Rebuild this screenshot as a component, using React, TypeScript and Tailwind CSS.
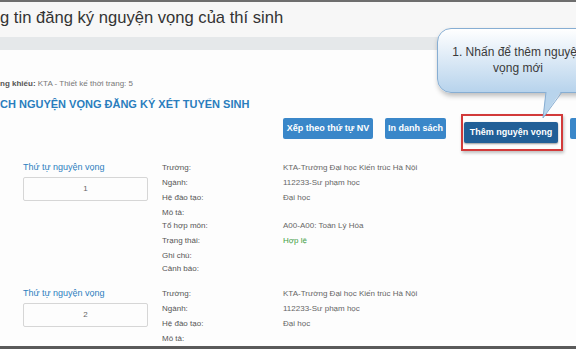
import React from 'react';

const rows1 = [
  { label: 'Trường:', value: 'KTA-Trường Đại học Kiến trúc Hà Nội' },
  { label: 'Ngành:', value: '112233-Sư phạm học' },
  { label: 'Hệ đào tạo:', value: 'Đại học' },
  { label: 'Mô tả:', value: '' },
  { label: 'Tổ hợp môn:', value: 'A00-A00: Toán Lý Hóa' },
  { label: 'Trạng thái:', value: 'Hợp lệ', ok: true },
  { label: 'Ghi chú:', value: '' },
  { label: 'Cảnh báo:', value: '' },
];

const rows2 = rows1.slice(0, 4);

type Row = { label: string; value: string; ok?: boolean };

function Wish({ order, rows }: { order: number; rows: Row[] }) {
  return (
    <div className="flex">
      <div className="w-[162px] pl-[23px]">
        <div className="h-[15px] leading-[15px] text-[9px] text-[#2f7fbf]">Thứ tự nguyện vọng</div>
        <div className="mt-[2px] w-[125px] h-[24px] border border-[#d6d6d6] rounded-[2px] flex items-center justify-center text-[8px] text-[#666]">
          {order}
        </div>
      </div>
      <div className="flex flex-col text-[8px] text-[#666]">
        {rows.map((r) => (
          <div key={r.label} className={`flex ${r.value ? 'h-[15px] leading-[15px]' : 'h-[13px] leading-[15px]'}`}>
            <div className="w-[121px] text-[#555]">{r.label}</div>
            <div className={r.ok ? 'text-[#3f9e45]' : ''}>{r.value}</div>
          </div>
        ))}
      </div>
    </div>
  );
}

export default function App() {
  return (
    <div className="relative w-[576px] h-[349px] overflow-hidden flex flex-col bg-white font-['Liberation_Sans',Arial,sans-serif]">
      <div className="h-[2px] bg-[#6e6e6e]" />
      <div className="h-[35px] bg-[#f7f7f7] pt-[7px] text-[16.6px] leading-[18px] text-[#333] whitespace-nowrap">
        g tin đăng ký nguyện vọng của thí sinh
      </div>
      <div className="h-[13px] bg-[#e5e8ea]" />

      <div className="flex-1 overflow-hidden bg-[#fdfdfd]">
        <div className="mt-[29px] h-[10px] leading-[10px] text-[8px] text-[#777] whitespace-nowrap">
          <span className="font-bold text-[#555]">ng khiếu:</span> KTA - Thiết kế thời trang: 5
        </div>
        <div className="mt-[9px] h-[12px] leading-[12px] text-[11px] font-bold text-[#2a7dbd] whitespace-nowrap">
          CH NGUYỆN VỌNG ĐĂNG KÝ XÉT TUYỂN SINH
        </div>

        <div className="mt-[8px] pl-[283px] flex items-start whitespace-nowrap">
          <button className="w-[90px] h-[21px] shrink-0 rounded-[2px] bg-[#3a87c9] text-white text-[9px] font-bold">
            Xếp theo thứ tự NV
          </button>
          <button className="ml-[12px] w-[61px] h-[21px] shrink-0 rounded-[2px] bg-[#3a87c9] text-white text-[9px] font-bold">
            In danh sách
          </button>
          <div className="ml-[15px] -mt-[4px] shrink-0 border-2 border-[#d23a3a] pl-[1px] pr-[3px] pt-[2px] pb-[6px] shadow-[1px_2px_3px_rgba(0,0,0,0.25)]">
            <button className="w-[94px] h-[21px] rounded-[2px] bg-[#215f97] text-white text-[9px] font-bold shadow-[0_1px_2px_rgba(0,0,0,0.4)]">
              Thêm nguyện vọng
            </button>
          </div>
          <button className="ml-[7px] w-[60px] h-[21px] shrink-0 rounded-[2px] bg-[#3a87c9] text-white text-[9px] font-bold" />
        </div>

        <div className="mt-[9px]">
          <Wish order={1} rows={rows1} />
        </div>
        <div className="mt-[12px]">
          <Wish order={2} rows={rows2} />
        </div>
      </div>
      <div className="h-[3px] bg-[#5a5a5a]" />

      {/* callout */}
      <div className="absolute left-[437px] top-[28px] w-[162px] h-[65px] rounded-[14px] border border-[#87aed3] bg-linear-to-b from-[#ffffff] to-[#b7d3ec] shadow-[1px_3px_5px_rgba(0,0,0,0.25)] pt-[15px] px-[8px] text-center text-[12px] leading-[16px] text-[#3a3a3a]">
        1. Nhấn để thêm nguyện vọng mới
      </div>
      <svg className="absolute left-[540px] top-[90px]" width="26" height="30" viewBox="0 0 26 30">
        <polygon points="6,0 22,0 3,28" fill="#b8d4ec" />
        <polyline points="6,2 3,28 22,2" fill="none" stroke="#87aed3" strokeWidth="1" />
      </svg>
    </div>
  );
}
